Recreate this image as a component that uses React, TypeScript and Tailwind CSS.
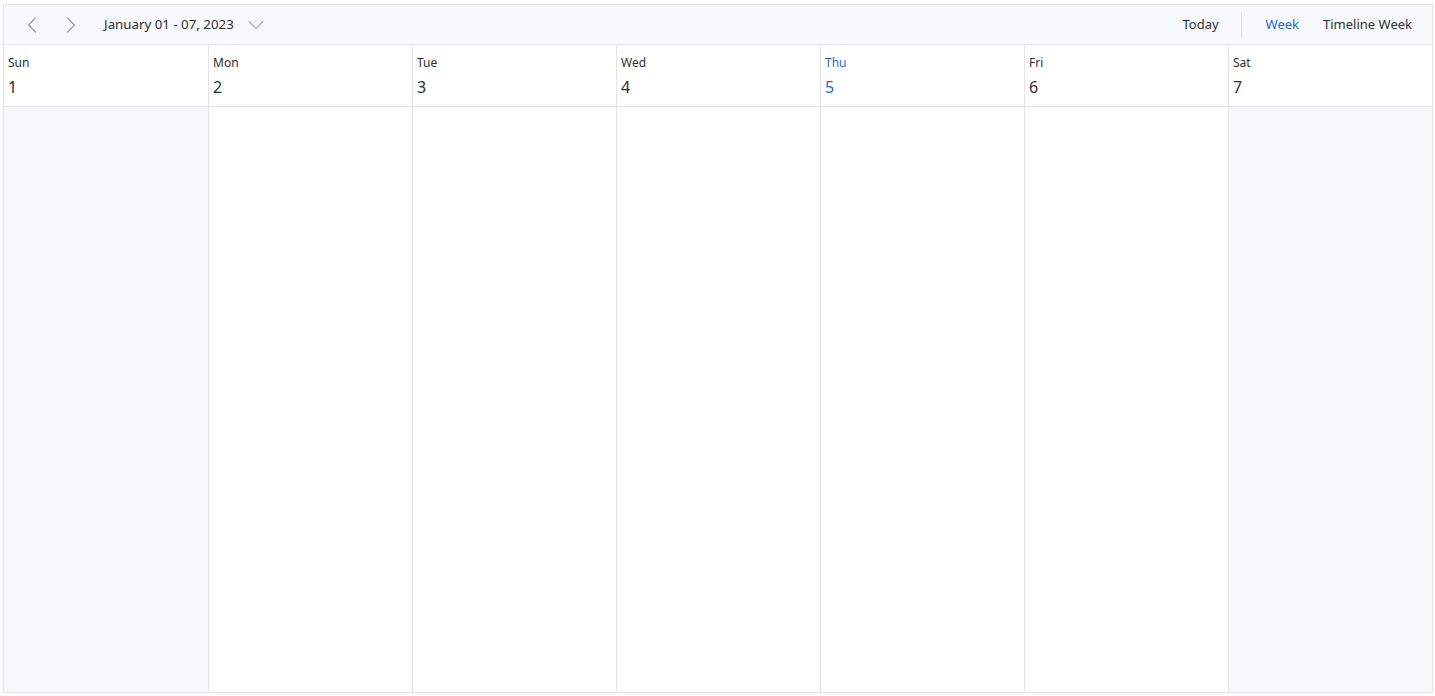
import { ChevronLeft, ChevronRight, ChevronDown } from "lucide-react";

interface DayMeta {
  name: string;
  date: number;
  today?: boolean;
  weekend?: boolean;
}

const days: DayMeta[] = [
  { name: "Sun", date: 1, weekend: true },
  { name: "Mon", date: 2 },
  { name: "Tue", date: 3 },
  { name: "Wed", date: 4 },
  { name: "Thu", date: 5, today: true },
  { name: "Fri", date: 6 },
  { name: "Sat", date: 7, weekend: true },
];

function Toolbar() {
  return (
    <div className="flex items-center h-[40px] bg-[#f8f9fa] border-b border-[#e3e5e8] px-[12px]">
      <div className="flex items-center">
        <button className="w-[32px] h-[32px] flex items-center justify-center text-[#6c757d]">
          <ChevronLeft className="w-[28px] h-[28px]" strokeWidth={0.9} />
        </button>
        <button className="w-[32px] h-[32px] ml-[7px] flex items-center justify-center text-[#6c757d]">
          <ChevronRight className="w-[28px] h-[28px]" strokeWidth={0.9} />
        </button>
        <button className="flex items-center ml-[17px] text-[13.3px] text-[#2b2f33]">
          <span>January 01 - 07, 2023</span>
          <ChevronDown className="w-[28px] h-[28px] ml-[8px] text-[#6c757d]" strokeWidth={0.85} />
        </button>
      </div>
      <div className="flex-1" />
      <div className="flex items-center text-[13px] text-[#2b2f33]">
        <button className="px-[4px]">Today</button>
        <div className="w-px h-[26px] bg-[#e3e5e8] ml-[18px] mr-[24px]" />
        <button className="text-[#1a6ad8]">Week</button>
        <button className="ml-[24px] mr-[8px]">Timeline Week</button>
      </div>
    </div>
  );
}

export default function App() {
  return (
    <div
      className="w-[1435px] h-[696px] bg-white pt-[4px] pl-[3px] pr-[2px] pb-[3px]"
      style={{ fontFamily: '"Noto Sans", "Open Sans", sans-serif' }}
    >
      <div className="flex flex-col h-full border border-[#e3e5e8]">
        <Toolbar />
        <div className="grid grid-cols-7 h-[62px] border-b border-[#e3e5e8]">
          {days.map((d, i) => (
            <div
              key={d.name}
              className={`pl-[4px] pt-[10px] ${i > 0 ? "border-l border-[#e3e5e8]" : ""} ${
                d.today ? "text-[#1a6ad8]" : "text-[#2b2f33]"
              }`}
            >
              <div className="text-[12px] leading-[16px]">{d.name}</div>
              <div className="text-[16px] leading-[20px] mt-[6px]">{d.date}</div>
            </div>
          ))}
        </div>
        <div className="grid grid-cols-7 flex-1">
          {days.map((d, i) => (
            <div
              key={d.name}
              className={`${i > 0 ? "border-l border-[#e3e5e8]" : ""} ${
                d.weekend ? "bg-[#f7f8fa]" : "bg-white"
              }`}
            />
          ))}
        </div>
      </div>
    </div>
  );
}
